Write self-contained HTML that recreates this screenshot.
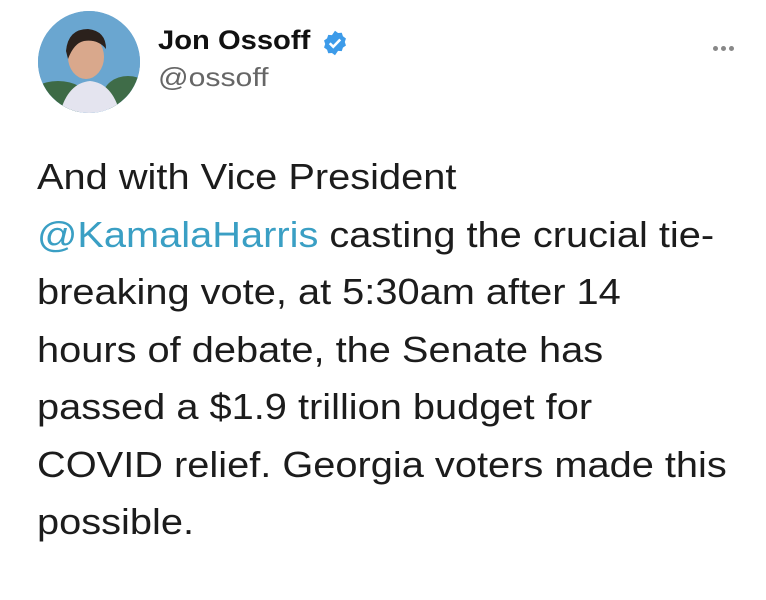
<!DOCTYPE html>
<html><head><meta charset="utf-8"><style>
html,body{margin:0;padding:0;background:#fff;width:766px;height:600px;overflow:hidden}
body{font-family:"Liberation Sans",Arial,sans-serif;position:relative;color:#1a1a1a}
.av{position:absolute;left:38px;top:11px;width:102px;height:102px;border-radius:50%;overflow:hidden;background:#5d9cc9}
.name{position:absolute;left:158px;top:25px;font-size:27px;font-weight:bold;color:#111;transform:scaleX(1.08);transform-origin:0 0;white-space:nowrap}
.handle{position:absolute;left:158px;top:62px;font-size:26px;color:#666;transform:scaleX(1.16);transform-origin:0 0}
.badge{position:absolute;left:321px;top:29px;width:28px;height:28px}
.dots{position:absolute;left:713px;top:38px}
.dots span{display:inline-block;width:5px;height:5px;border-radius:50%;background:#888;margin-right:3px}
.body{position:absolute;left:37px;top:148px;font-size:36px;line-height:57.5px;color:#1c1c1c;white-space:nowrap;transform:scaleX(1.105);transform-origin:0 0}
.m{color:#3a9fc4}
</style></head><body>
<div class="av">
<svg width="102" height="102" viewBox="0 0 102 102">
<rect width="102" height="102" fill="#6aa6d0"/>
<ellipse cx="20" cy="88" rx="30" ry="18" fill="#3d6a45"/>
<ellipse cx="90" cy="85" rx="25" ry="20" fill="#3f6c48"/>
<path d="M22 102 Q30 72 52 70 Q74 72 82 102Z" fill="#e4e4ef"/>
<ellipse cx="48" cy="46" rx="18" ry="22" fill="#d9a88c"/>
<path d="M28 40 Q30 18 50 18 Q68 20 68 38 Q60 28 46 30 Q36 32 30 48Z" fill="#2b211c"/>
</svg>
</div>
<div class="name">Jon Ossoff</div>
<svg class="badge" viewBox="0 0 24 24"><path d="M12 1.5l2.6 1.9 3.2-.2 1 3 2.6 1.9-1 3 1 3-2.6 1.9-1 3-3.2-.2L12 22.5l-2.6-1.9-3.2.2-1-3-2.6-1.9 1-3-1-3 2.6-1.9 1-3 3.2.2z" fill="#3d9be9"/><path d="M7.5 12.2l3 3 6-6.2" stroke="#fff" stroke-width="2.2" fill="none"/></svg>
<div class="handle">@ossoff</div>
<div class="dots"><span></span><span></span><span></span></div>
<div class="body">
<div>And with Vice President</div>
<div><span class="m">@KamalaHarris</span> casting the crucial tie-</div>
<div>breaking vote, at 5:30am after 14</div>
<div>hours of debate, the Senate has</div>
<div>passed a $1.9 trillion budget for</div>
<div>COVID relief. Georgia voters made this</div>
<div>possible.</div>
</div>
</body></html>
